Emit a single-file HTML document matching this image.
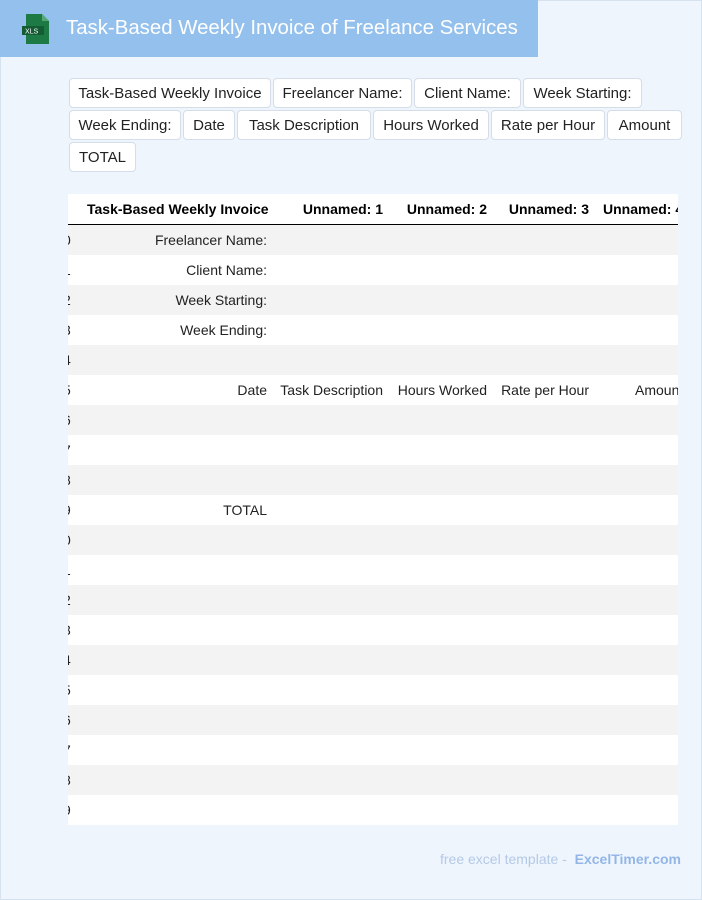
<!DOCTYPE html>
<html><head><meta charset="utf-8"><style>
*{box-sizing:border-box;margin:0;padding:0}
body{width:702px;height:900px;background:#eef5fd;font-family:"Liberation Sans",Arial,sans-serif;position:relative;overflow:hidden;box-shadow:inset 0 0 0 1px #d6e2ef}
.hdr{position:absolute;left:0;top:0;width:538px;height:57px;background:#93c0ec}
.hdr h1{position:absolute;left:66px;top:17px;font-size:20.4px;font-weight:normal;color:#fff;white-space:nowrap}
.btn{position:absolute;height:30px;background:#fff;border:1px solid #d5dde8;border-radius:4px;font-size:15px;line-height:29px;text-align:center;color:#222;white-space:nowrap}
.tbl{position:absolute;left:68px;top:194px;width:610px;height:631px;overflow:hidden;background:#fff}
.row{position:absolute;left:0;width:610px;height:30px;font-size:14px;color:#222}
.row span{position:absolute;top:7px;white-space:nowrap}
.hd span{font-weight:bold;color:#000;font-size:14px}
.foot{position:absolute;right:21px;top:851px;font-size:14px;color:#b4c9e6}
.foot b{color:#93b6e6}
</style></head><body>
<div class="hdr">
<svg style="position:absolute;left:22px;top:14px" width="28" height="30" viewBox="0 0 28 30"><path d="M4 0h16l7 7v23H4z" fill="#1e7a45"/><path d="M20 0v7h7z" fill="#54a874"/><rect x="0" y="12" width="22" height="9" fill="#145c33"/><text x="3" y="19.5" font-size="7" fill="#fff" font-family="Liberation Sans">XLS</text></svg>
<h1>Task-Based Weekly Invoice of Freelance Services</h1>
</div>
<div class="btn" style="left:69px;top:78px;width:202px">Task-Based Weekly Invoice</div>
<div class="btn" style="left:273px;top:78px;width:139px">Freelancer Name:</div>
<div class="btn" style="left:414px;top:78px;width:107px">Client Name:</div>
<div class="btn" style="left:523px;top:78px;width:119px">Week Starting:</div>
<div class="btn" style="left:69px;top:110px;width:112px">Week Ending:</div>
<div class="btn" style="left:183px;top:110px;width:52px">Date</div>
<div class="btn" style="left:237px;top:110px;width:134px">Task Description</div>
<div class="btn" style="left:373px;top:110px;width:116px">Hours Worked</div>
<div class="btn" style="left:491px;top:110px;width:114px">Rate per Hour</div>
<div class="btn" style="left:607px;top:110px;width:75px">Amount</div>
<div class="btn" style="left:69px;top:142px;width:67px">TOTAL</div>
<div class="tbl">
<div class="row hd" style="top:0;border-bottom:1.5px solid #000;height:31px">
<span style="left:19px">Task-Based Weekly Invoice</span>
<span style="right:295px">Unnamed: 1</span>
<span style="right:191px">Unnamed: 2</span>
<span style="right:89px">Unnamed: 3</span>
<span style="left:535px">Unnamed: 4</span>
</div>
<div class="row" style="top:31px;background:#f3f3f3"><span style="left:-5px">0</span><span style="right:411px">Freelancer Name:</span></div>
<div class="row" style="top:61px"><span style="left:-5px">1</span><span style="right:411px">Client Name:</span></div>
<div class="row" style="top:91px;background:#f3f3f3"><span style="left:-5px">2</span><span style="right:411px">Week Starting:</span></div>
<div class="row" style="top:121px"><span style="left:-5px">3</span><span style="right:411px">Week Ending:</span></div>
<div class="row" style="top:151px;background:#f3f3f3"><span style="left:-5px">4</span></div>
<div class="row" style="top:181px"><span style="left:-5px">5</span><span style="right:411px">Date</span><span style="right:295px">Task Description</span><span style="right:191px">Hours Worked</span><span style="right:89px">Rate per Hour</span><span style="left:567px">Amount</span></div>
<div class="row" style="top:211px;background:#f3f3f3"><span style="left:-5px">6</span></div>
<div class="row" style="top:241px"><span style="left:-5px">7</span></div>
<div class="row" style="top:271px;background:#f3f3f3"><span style="left:-5px">8</span></div>
<div class="row" style="top:301px"><span style="left:-5px">9</span><span style="right:411px">TOTAL</span></div>
<div class="row" style="top:331px;background:#f3f3f3"><span style="left:-5px">0</span></div>
<div class="row" style="top:361px"><span style="left:-5px">1</span></div>
<div class="row" style="top:391px;background:#f3f3f3"><span style="left:-5px">2</span></div>
<div class="row" style="top:421px"><span style="left:-5px">3</span></div>
<div class="row" style="top:451px;background:#f3f3f3"><span style="left:-5px">4</span></div>
<div class="row" style="top:481px"><span style="left:-5px">5</span></div>
<div class="row" style="top:511px;background:#f3f3f3"><span style="left:-5px">6</span></div>
<div class="row" style="top:541px"><span style="left:-5px">7</span></div>
<div class="row" style="top:571px;background:#f3f3f3"><span style="left:-5px">8</span></div>
<div class="row" style="top:601px"><span style="left:-5px">9</span></div>
</div>
<div class="foot">free excel template - &nbsp;<b>ExcelTimer.com</b></div>
</body></html>
